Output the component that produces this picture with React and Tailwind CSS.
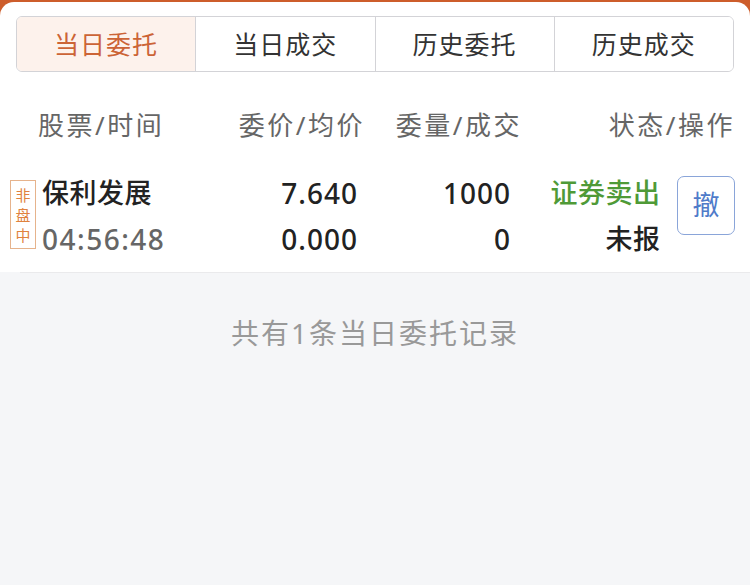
export default function App() {
  const tabs = ["当日委托", "当日成交", "历史委托", "历史成交"];
  return (
    <div className="w-[750px] h-[585px] bg-[#f5f6f8] font-['Noto_Sans','Noto_Sans_CJK_SC',sans-serif] overflow-hidden">
      <div className="bg-[#cd5d2b] pt-[2px]">
        <div className="bg-white rounded-t-[14px] pt-[14px]">
          <div className="mx-[16px] h-[56px] flex border-[1.5px] border-[#d3d3d7] rounded-[6px] overflow-hidden">
            {tabs.map((t, i) => (
              <div
                key={t}
                className={
                  "flex-1 flex items-center justify-center text-[25px] tracking-[1px] leading-none " +
                  (i === 0 ? "bg-[#fdf2ec] text-[#cc6436]" : "bg-white text-[#333333]") +
                  (i > 0 ? " border-l-[1.5px] border-[#d3d3d7]" : "")
                }
              >
                {t}
              </div>
            ))}
          </div>
          <div className="h-[98px] pt-[8px] flex items-center pl-[38px] text-[26px] tracking-[2.5px] leading-none text-[#666666] whitespace-nowrap">
            <div className="w-[200px] flex">股票/时间</div>
            <div className="w-[127px] flex justify-end">委价/均价</div>
            <div className="w-[157px] flex justify-end">委量/成交</div>
            <div className="flex-1 flex justify-end pr-[15px]">状态/操作</div>
          </div>
          <div className="h-[102px] flex items-start pl-[10px]">
            <div className="mt-[10px] w-[26px] h-[69px] border border-[#e6b38c] flex flex-col items-center justify-center text-[15px] leading-[20px] text-[#e0823e]">
              <span>非</span>
              <span>盘</span>
              <span>中</span>
            </div>
            <div className="ml-[6px] w-[190px] flex flex-col whitespace-nowrap">
              <div className="h-[46px] leading-[46px] text-[27px] font-medium tracking-[0.5px] text-[#222222]">保利发展</div>
              <div className="h-[46px] leading-[46px] text-[28px] font-medium tracking-[1.5px] text-[#666666]">04:56:48</div>
            </div>
            <div className="w-[125px] flex flex-col text-right text-[28px] font-medium tracking-[1px] text-[#222222]">
              <div className="h-[46px] leading-[46px] mr-[-1px]">7.640</div>
              <div className="h-[46px] leading-[46px] mr-[-1px]">0.000</div>
            </div>
            <div className="w-[153px] flex flex-col text-right text-[28px] font-medium tracking-[1px] text-[#222222]">
              <div className="h-[46px] leading-[46px] mr-[-1px]">1000</div>
              <div className="h-[46px] leading-[46px] mr-[-1px]">0</div>
            </div>
            <div className="w-[150px] flex flex-col text-right text-[27px] font-medium tracking-[0.5px] whitespace-nowrap">
              <div className="h-[46px] leading-[46px] text-[#4f9a37] mr-[-0.5px]">证券卖出</div>
              <div className="h-[46px] leading-[46px] text-[#222222] mr-[-0.5px]">未报</div>
            </div>
            <div className="ml-[17px] mt-[6px] w-[58px] h-[59px] border-[1.5px] border-[#8aa5d9] rounded-[7px] flex items-center justify-center text-[27px] text-[#4f7bc9]">
              撤
            </div>
          </div>
        </div>
      </div>
      <div className="ml-[20px] h-px bg-[#eaeaec]" />
      <div className="mt-[44px] text-center text-[28px] tracking-[2px] leading-[32px] text-[#999999]">
        共有1条当日委托记录
      </div>
    </div>
  );
}
